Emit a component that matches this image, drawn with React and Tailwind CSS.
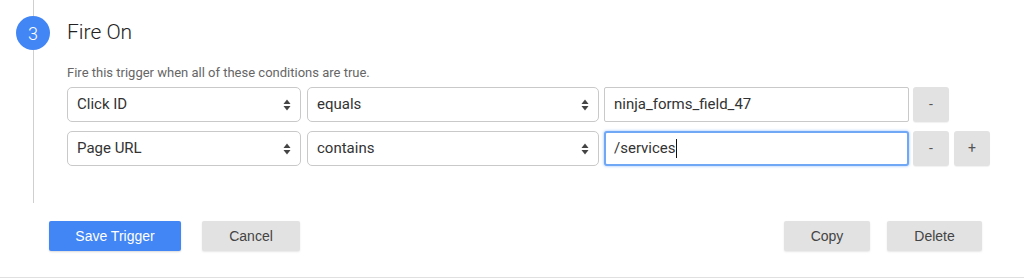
import { useState } from 'react';

const SelectArrows = () => (
    <svg width="8" height="12" viewBox="0 0 8 12" className="pointer-events-none absolute right-[10px] top-1/2 -translate-y-1/2">
        <path d="M4 0.5 L7.5 5 L0.5 5 Z" fill="#444" />
        <path d="M4 11.5 L7.5 7 L0.5 7 Z" fill="#444" />
    </svg>
);

const FakeSelect = ({ value, options, width }) => {
    const [val, setVal] = useState(value);
    return (
        <div className={`relative h-full ${width}`}>
            <select
                value={val}
                onChange={(e) => setVal(e.target.value)}
                className="appearance-none w-full h-full bg-white border border-[#c9c9c9] rounded-[5px] pl-[9px] pr-6 text-[15px] text-[#333] outline-none"
            >
                {options.map((o) => (
                    <option key={o}>{o}</option>
                ))}
            </select>
            <SelectArrows />
        </div>
    );
};

const SmallButton = ({ label }) => (
    <button className="w-[36px] h-full bg-[#e2e2e2] rounded-[3px] text-[14px] text-[#555] shadow-[0_1px_1px_rgba(0,0,0,0.06)]">
        {label}
    </button>
);

export default function App() {
    const conditions = [
        { variable: 'Click ID', operator: 'equals', value: 'ninja_forms_field_47', focused: false, last: false },
        { variable: 'Page URL', operator: 'contains', value: '/services', focused: true, last: true },
    ];

    return (
        <div className="w-[1024px] h-[278px] bg-white border-b border-[#e0e0e0] font-['Roboto',sans-serif] flex flex-col">
            <div className="flex h-[203px]">
                <div className="w-[66px] flex flex-col items-center">
                    <div className="w-px h-[16px] bg-[#cfcfcf]" />
                    <div className="w-[34px] h-[34px] rounded-full bg-[#4285f4] flex items-center justify-center text-white text-[18px] font-light">
                        3
                    </div>
                    <div className="w-px flex-1 bg-[#cfcfcf]" />
                </div>
                <div className="flex-1 pl-px pt-[16px]">
                    <div className="h-[34px] flex items-center text-[21px] font-light text-[#222]">Fire On</div>
                    <div className="mt-[15px] text-[13px] leading-[16px] text-[#666]">
                        Fire this trigger when all of these conditions are true.
                    </div>
                    <div className="mt-[6px] flex flex-col gap-[9px]">
                        {conditions.map((c) => (
                            <div key={c.variable} className="flex h-[35px]">
                                <FakeSelect value={c.variable} options={['Click ID', 'Page URL', 'Page Path']} width="w-[234px]" />
                                <div className="w-[6px]" />
                                <FakeSelect value={c.operator} options={['equals', 'contains', 'starts with']} width="w-[292px]" />
                                <div className="w-[5px]" />
                                {c.focused ? (
                                    <div className="w-[305px] h-full bg-white border-2 border-[#70a8f5] rounded-[3px] shadow-[0_0_3px_rgba(77,144,254,0.6)] pl-[8px] flex items-center text-[15px] text-[#333]">
                                        <span>{c.value}</span>
                                        <span className="w-px h-[19px] bg-[#111]" />
                                    </div>
                                ) : (
                                    <div className="w-[305px] h-full bg-white border border-[#c9c9c9] rounded-[2px] pl-[9px] flex items-center text-[15px] text-[#333]">
                                        {c.value}
                                    </div>
                                )}
                                <div className="w-[4px]" />
                                <SmallButton label="-" />
                                {c.last && (
                                    <>
                                        <div className="w-[5px]" />
                                        <SmallButton label="+" />
                                    </>
                                )}
                            </div>
                        ))}
                    </div>
                </div>
            </div>
            <div className="flex items-start pt-[18px] pl-[49px] pr-[42px] font-['Liberation_Sans',Arial,sans-serif] text-[14px]">
                <button className="w-[132px] h-[30px] bg-[#4285f4] text-white rounded-[2px] shadow-[0_1px_2px_rgba(0,0,0,0.15)]">
                    Save Trigger
                </button>
                <button className="ml-[21px] w-[98px] h-[30px] bg-[#e2e2e2] text-[#444] rounded-[2px] shadow-[0_1px_2px_rgba(0,0,0,0.1)]">
                    Cancel
                </button>
                <div className="flex-1" />
                <button className="w-[86px] h-[30px] bg-[#e2e2e2] text-[#444] rounded-[2px] shadow-[0_1px_2px_rgba(0,0,0,0.1)]">
                    Copy
                </button>
                <button className="ml-[17px] w-[95px] h-[30px] bg-[#e2e2e2] text-[#444] rounded-[2px] shadow-[0_1px_2px_rgba(0,0,0,0.1)]">
                    Delete
                </button>
            </div>
        </div>
    );
}
